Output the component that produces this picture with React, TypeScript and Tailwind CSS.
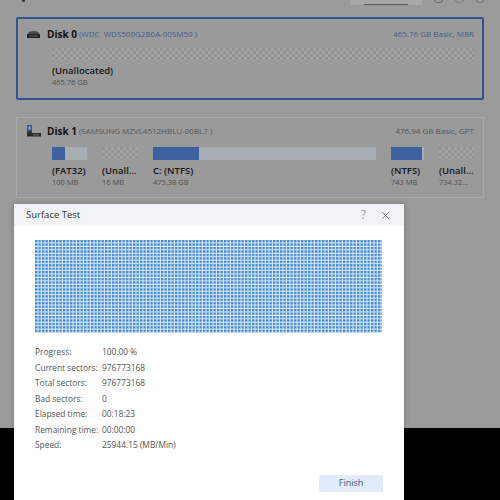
import React from 'react';

const FONT = { fontFamily: '"Open Sans", "Noto Sans", "Liberation Sans", sans-serif' };

/** Partitions shown on the second disk */
const PARTS = [
  { w: 'w-[35px]', fill: 'w-[13px]', name: '(FAT32)', size: '100 MB', unalloc: false },
  { w: 'w-[36px]', fill: '', name: '(Unall...', size: '16 MB', unalloc: true },
  { w: 'flex-1', fill: 'w-[46px]', name: 'C: (NTFS)', size: '475.38 GB', unalloc: false },
  { w: 'w-[33px]', fill: 'w-[31px]', name: '(NTFS)', size: '743 MB', unalloc: false },
  { w: 'w-[35px]', fill: '', name: '(Unall...', size: '734.32...', unalloc: true },
];

function Checker({ className }: { className: string }) {
  return (
    <svg className={className} preserveAspectRatio="none">
      <defs>
        <pattern id="chk" width="6" height="6" patternUnits="userSpaceOnUse">
          <rect width="6" height="6" fill="#a3a3a3" />
          <rect width="3" height="3" fill="#929292" />
          <rect x="3" y="3" width="3" height="3" fill="#929292" />
        </pattern>
      </defs>
      <rect width="100%" height="100%" fill="url(#chk)" />
    </svg>
  );
}

function HddIcon() {
  return (
    <svg width="15" height="9" viewBox="0 0 15 9">
      <path d="M2 4 Q2 1 7.5 1 Q13 1 13 4 Z" fill="#4a4a4a" />
      <rect x="1" y="4" width="13" height="4" rx="0.5" fill="#1f1f1f" />
      <rect x="3" y="5.5" width="9" height="1" fill="#6a6a6a" />
    </svg>
  );
}

function SsdIcon() {
  return (
    <svg width="16" height="12" viewBox="0 0 16 12">
      <rect x="1" y="0" width="5" height="6" fill="#2f5a98" />
      <rect x="2.5" y="1.5" width="2" height="3" fill="#8fb0dc" />
      <rect x="1" y="6" width="5" height="2" fill="#3a3a3a" />
      <rect x="1" y="8" width="14" height="3.5" fill="#2a2a2a" />
      <rect x="7" y="9.3" width="6" height="1" fill="#777" />
    </svg>
  );
}

/** Surface scan grid — every block read OK */
function ScanGrid() {
  return (
    <svg className="w-[347px] h-[93px] block">
      <defs>
        <pattern id="blk" width="3.5" height="3.45" patternUnits="userSpaceOnUse">
          <rect width="3.5" height="3.45" fill="#dceaf9" />
          <rect width="2.4" height="2.35" fill="#4189d8" />
        </pattern>
      </defs>
      <rect width="100%" height="100%" fill="url(#blk)" />
    </svg>
  );
}

const STATS: [string, string][] = [
  ['Progress:', '100.00 %'],
  ['Current sectors:', '976773168'],
  ['Total sectors:', '976773168'],
  ['Bad sectors:', '0'],
  ['Elapsed time:', '00:18:23'],
  ['Remaining time:', '00:00:00'],
  ['Speed:', '25944.15 (MB/Min)'],
];

export default function App() {
  return (
    <div className="w-[500px] h-[500px] relative overflow-hidden bg-black" style={FONT}>
      {/* app window behind the modal (dimmed) */}
      <div className="h-[428px] bg-[#9b9b9b] px-[16px] flex flex-col">
        <div className="h-[10px] flex items-start">
          <div className="ml-[6px] -mt-[1px] w-[3px] h-[3px] rounded-full bg-[#333]" />
          <div className="ml-auto -mt-[8px] w-[72px] h-[13px] bg-[#a8a8a8] flex items-end justify-center">
            <div className="w-[44px] h-[1.5px] bg-[#555]" />
          </div>
          <div className="ml-[12px] -mt-[4px] w-[9px] h-[7px] rounded-sm border border-[#666]" />
          <div className="ml-[12px] -mt-[4px] w-[9px] h-[7px] rounded-sm border border-[#777]" />
          <div className="ml-[12px] -mt-[4px] w-[8px] h-[7px] rounded-full border border-[#777]" />
        </div>

        {/* Disk 0 — selected */}
        <div className="mt-[7px] h-[83px] border-2 border-[#2f5290] rounded-[2px] bg-[#9a9a9a] pl-[8px] pr-[8px] pt-[8px]">
          <div className="flex items-center h-[14px]">
            <HddIcon />
            <span className="ml-[6px] text-[10px] font-bold text-[#111]">Disk 0</span>
            <span className="ml-[2px] text-[8px] text-[#3f5f94]">(WDC&nbsp; WDS500G2B0A-00SM50 )</span>
            <span className="ml-auto text-[8px] text-[#3f5f94]">465.76 GB Basic, MBR</span>
          </div>
          <div className="pl-[26px] mt-[7px]">
            <Checker className="block w-full h-[13px]" />
            <div className="mt-[3px] text-[9.5px] font-semibold text-[#151515] leading-[13px]">(Unallocated)</div>
            <div className="text-[7.5px] text-[#505050] leading-[11px]">465.76 GB</div>
          </div>
        </div>

        {/* Disk 1 */}
        <div className="mt-[17px] h-[81px] border border-[#a9a9a9] bg-[#9a9a9a] pl-[9px] pr-[9px] pt-[6px]">
          <div className="flex items-center h-[14px]">
            <SsdIcon />
            <span className="ml-[5px] text-[10px] font-bold text-[#111]">Disk 1</span>
            <span className="ml-[2px] text-[8px] text-[#555]">(SAMSUNG MZVL4512HBLU-00BL7 )</span>
            <span className="ml-auto text-[8px] text-[#555]">476.94 GB Basic, GPT</span>
          </div>
          <div className="pl-[26px] mt-[9px] flex gap-[15px]">
            {PARTS.map((p, i) => (
              <div key={i} className={p.w}>
                {p.unalloc ? (
                  <Checker className="block w-full h-[13px]" />
                ) : (
                  <div className="h-[13px] bg-[#a8acb3] flex">
                    <div className={`${p.fill} h-full bg-[#3e62a0]`} />
                  </div>
                )}
                <div className="mt-[4px] text-[9.5px] font-semibold text-[#151515] leading-[13px] whitespace-nowrap">{p.name}</div>
                <div className="text-[7.5px] text-[#505050] leading-[10px] whitespace-nowrap">{p.size}</div>
              </div>
            ))}
          </div>
        </div>
      </div>

      {/* Surface Test dialog */}
      <div className="absolute left-[14px] top-[204px] w-[390px] h-[300px] bg-white shadow-[0_0_6px_rgba(0,0,0,0.25)] flex flex-col">
        <div className="h-[22px] bg-[#f1f3f6] flex items-center pl-[12px] pr-[14px]">
          <span className="text-[9.5px] text-[#333]">Surface Test</span>
          <span className="ml-auto text-[12px] text-[#9a9a9a] leading-none">?</span>
          <svg className="ml-[15px]" width="9" height="9" viewBox="0 0 9 9">
            <path d="M1 1 L8 8 M8 1 L1 8" stroke="#8a8a8a" strokeWidth="1" />
          </svg>
        </div>
        <div className="pl-[21px] pt-[14px]">
          <ScanGrid />
          <div className="mt-[12px] flex flex-col">
            {STATS.map(([k, v]) => (
              <div key={k} className="flex h-[15.5px] items-center text-[8.4px] text-[#555]">
                <span className="w-[67px] whitespace-nowrap">{k}</span>
                <span>{v}</span>
              </div>
            ))}
          </div>
        </div>
        <div className="flex justify-end pr-[21px] mt-[21px]">
          <div className="w-[64px] h-[17px] bg-[#e2ebf9] flex items-center justify-center text-[9px] text-[#3b5a8d]">
            Finish
          </div>
        </div>
      </div>
    </div>
  );
}
